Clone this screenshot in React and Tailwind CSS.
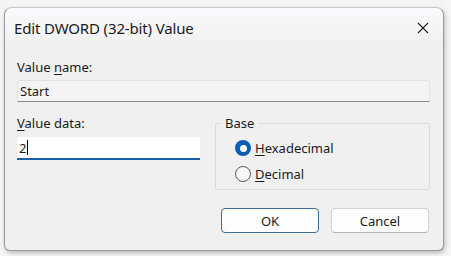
import React from "react";

export default function App() {
  return (
    <div
      className="w-[451px] h-[256px] bg-[#f5f5f5] pt-[7px] pl-[4px] overflow-hidden"
      style={{ fontFamily: '"Noto Sans", "Open Sans", sans-serif' }}
    >
      <div className="w-[440px] h-[244px] bg-[#f0f0f0] border border-[#9a9a9a] border-t-[#c8c8c8] rounded-t-[8px] rounded-b-[6px] shadow-[1px_2px_4px_rgba(0,0,0,0.25)] flex flex-col text-[#1b1b1b]">
        <div className="h-[39px] shrink-0 rounded-t-[8px] bg-gradient-to-b from-[#f9fafd] to-[#f0f0f0] flex items-center justify-between pl-[9px] pr-[14px]">
          <span className="text-[15px] leading-[20px] tracking-[-0.15px]">Edit DWORD (32-bit) Value</span>
          <svg width="12" height="12" viewBox="0 0 12 12" className="mt-[1px]">
            <path d="M1 1 L11 11 M11 1 L1 11" stroke="#1b1b1b" strokeWidth="1.1" fill="none" />
          </svg>
        </div>
        <div className="pl-[12px] pr-[13px] flex flex-col text-[13px] leading-[16px]">
          <div className="mt-[12px]">
            Value <span className="underline underline-offset-2">n</span>ame:
          </div>
          <div className="mt-[5px] h-[22px] bg-[#f4f4f4] border border-[#e2e2e2] border-b-[#8a8a8a] rounded-t-[3px] flex items-center pl-[2px]">
            Start
          </div>
          <div className="mt-[13px] flex">
            <div className="w-[183px] flex flex-col">
              <div>
                <span className="underline underline-offset-2">V</span>alue data:
              </div>
              <div className="mt-[6px] h-[23px] bg-white rounded-t-[3px] border-b-2 border-[#1a5fa8] flex items-center pl-[2px]">
                <span>2</span>
                <span className="w-px h-[15px] bg-black ml-px" />
              </div>
            </div>
            <fieldset className="ml-[15px] flex-1 h-[75px] border border-[#dadada] rounded-[2px]">
              <legend className="ml-[5px] px-[4px] leading-[16px]">Base</legend>
              <div className="flex flex-col gap-[10px] mt-[9px] pl-[19px]">
                <div className="flex items-center gap-[4px]">
                  <span className="w-[16px] h-[16px] rounded-full bg-[#0a5fb4] flex items-center justify-center">
                    <span className="w-[7px] h-[7px] rounded-full bg-white" />
                  </span>
                  <span>
                    <span className="underline underline-offset-2">H</span>exadecimal
                  </span>
                </div>
                <div className="flex items-center gap-[4px]">
                  <span className="w-[16px] h-[16px] rounded-full border border-[#5a5a5a] bg-[#f7f7f7]" />
                  <span>
                    <span className="underline underline-offset-2">D</span>ecimal
                  </span>
                </div>
              </div>
            </fieldset>
          </div>
          <div className="mt-[18px] flex justify-end gap-[12px] pr-[1px]">
            <div className="w-[98px] h-[25px] bg-[#fdfdfd] border border-[#3d6f95] rounded-[4px] flex items-center justify-center">
              OK
            </div>
            <div className="w-[98px] h-[25px] bg-[#fdfdfd] border border-[#d3d3d3] border-b-[#b5b5b5] rounded-[4px] flex items-center justify-center">
              Cancel
            </div>
          </div>
        </div>
      </div>
    </div>
  );
}
